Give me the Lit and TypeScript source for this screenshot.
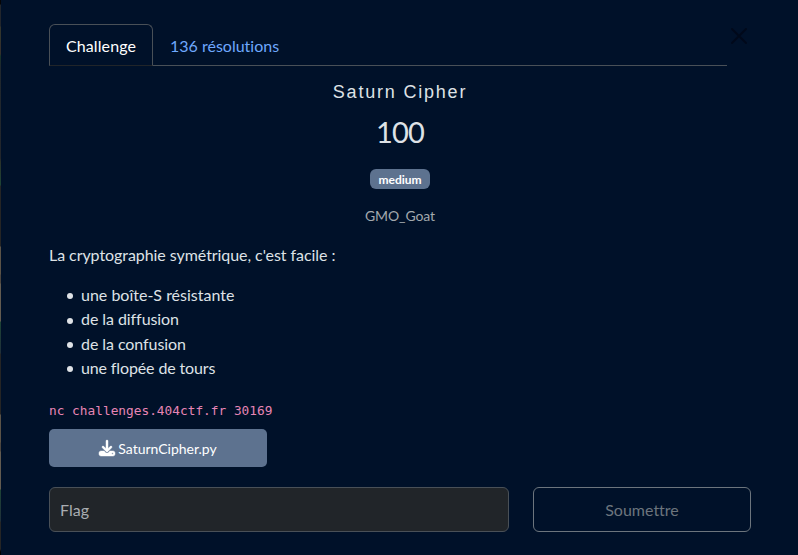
import { LitElement, html, css } from "lit";
import { customElement } from "lit/decorators.js";

const ITEMS = ["une boîte-S résistante", "de la diffusion", "de la confusion", "une flopée de tours"];

@customElement("app-root")
export class AppRoot extends LitElement {
  static styles = css`
    :host { display: block; height: 555px; overflow: hidden; background: #001129; color: #dee2e6;
      font: 16px/24px Lato, sans-serif; font-variant-ligatures: none; box-sizing: border-box; position: relative; }
    * { box-sizing: border-box; }
    .backdrop { position: absolute; left: 0; top: 0; width: 1px; height: 555px;
      background: linear-gradient(#050505 0 4px, #22262c 5px 26px, #33352c 27px 42px, #35302c 43px 54px, #173629 56px, #20282e 66px, #22262c 158px, #2b332a 162px, #1d4436 185px, #252525 186px 246px, #5b5347 247px 274px, #4c463f 275px 283px, #625b50 284px 321px, #1d4436 322px, #20303a 353px, #252525 354px 414px, #5b5347 415px 442px, #4c463f 443px 451px, #625b50 452px 489px, #1d4436 490px, #20303a 521px, #252525 522px 549px, #000 552px); }
    .close { position: absolute; left: 731px; top: 28px; width: 16px; height: 16px; padding: 0; border: 0; background: none; color: #00091a; }
    .close svg { display: block; }
    .modal { padding: 24px 47px 0 49px; }
    .tabs { display: flex; width: 678px; height: 42px; border-bottom: 1px solid #495057; }
    .tab { height: 42px; padding: 9px 16px 0; border: 1px solid transparent; color: #6ea8fe; white-space: nowrap; }
    .active { width: 104px; color: #fff; letter-spacing: 0.1px; border-color: #495057; border-bottom-color: #212529; border-radius: 6px 6px 0 0; }
    .head { width: 702px; display: flex; flex-direction: column; align-items: center; }
    .name { margin: 15px 0 0; font: 400 18px/22px "Liberation Sans", sans-serif; letter-spacing: 1.8px; }
    .value { margin: 12px 0 0; font-size: 29px; line-height: 34px; font-weight: 400; letter-spacing: -0.8px; }
    .badge { margin-top: 20px; height: 20px; padding: 0 8px; border-radius: 6px; background: #5d728f; color: #fff; font-size: 12px; line-height: 21px; font-weight: 700; }
    .author { margin-top: 16px; font-size: 14px; line-height: 21px; color: #a3a9ae; letter-spacing: -0.1px; }
    .desc { margin: 17px 0 0; letter-spacing: -0.06px; }
    ul { margin: 16px 0 0; padding: 0 0 0 18px; list-style: none; }
    li { display: flex; align-items: center; gap: 8px; line-height: 24.4px; letter-spacing: -0.07px; }
    li:first-child { letter-spacing: 0; }
    li:last-child { letter-spacing: -0.13px; }
    li::before { content: ""; width: 6px; height: 6px; margin-top: 2px; border-radius: 50%; background: currentColor; }
    code { display: block; margin-top: 20px; font: 12.8px/20px "DejaVu Sans Mono", monospace; color: #e685b5; }
    .file { display: flex; align-items: center; justify-content: center; gap: 3px; width: 218px; height: 38px; margin-top: 8px; padding: 1px 6px 0; border: 0; border-radius: 5px; background: #5d728f; color: #fff; font: 14px/21px Lato, sans-serif; font-variant-ligatures: none; }
    .file svg { margin-top: -1px; overflow: visible; }
    .file span { padding-top: 1px; }
    .row { display: flex; gap: 24px; margin-top: 20px; }
    .flag { width: 460px; height: 45px; padding: 0 10px; border: 1px solid #495057; border-radius: 6px; background: #212529; color: #dee2e6; font: 16px Lato, sans-serif; }
    .flag::placeholder { color: #a9adb1; opacity: 1; }
    .submit { width: 218px; height: 45px; padding: 0; border: 1px solid #6c757d; border-radius: 6px; background: none; color: #6c757d; font: 16px Lato, sans-serif; font-variant-ligatures: none; }
  `;

  render() {
    return html`
      <div class="backdrop"></div>
      <button class="close" aria-label="Fermer">
        <svg width="16" height="16" viewBox="0 0 16 16"><path d="M1 1 15 15M15 1 1 15" stroke="currentColor" stroke-width="1.8" stroke-linecap="round" /></svg>
      </button>
      <div class="modal">
        <nav class="tabs"><a class="tab active">Challenge</a><a class="tab">136 résolutions</a></nav>
        <div class="head">
          <h4 class="name">Saturn Cipher</h4>
          <h3 class="value">100</h3>
          <span class="badge">medium</span>
          <span class="author">GMO_Goat</span>
        </div>
        <p class="desc">La cryptographie symétrique, c'est facile :</p>
        <ul>${ITEMS.map((t) => html`<li>${t}</li>`)}</ul>
        <code>nc challenges.404ctf.fr 30169</code>
        <button class="file">
          <svg width="16" height="16" viewBox="0 0 512 512" fill="currentColor" stroke="currentColor" stroke-width="14"><path d="M288 32c0-17.700-14.300-32-32-32s-32 14.300-32 32V274.700l-73.400-73.400c-12.500-12.500-32.800-12.500-45.300 0s-12.500 32.800 0 45.300l128 128c12.500 12.500 32.800 12.500 45.300 0l128-128c12.500-12.500 12.500-32.800 0-45.300s-32.800-12.500-45.300 0L288 274.700V32zM64 352c-35.300 0-64 28.700-64 64v32c0 35.300 28.700 64 64 64H448c35.300 0 64-28.700 64-64V416c0-35.300-28.700-64-64-64H346.500l-45.300 45.300c-25 25-65.500 25-90.500 0L165.500 352H64zm368 56a24 24 0 1 1 0 48 24 24 0 1 1 0-48z" /></svg>
          <span>SaturnCipher.py</span>
        </button>
        <div class="row"><input class="flag" placeholder="Flag" /><button class="submit">Soumettre</button></div>
      </div>`;
  }
}
